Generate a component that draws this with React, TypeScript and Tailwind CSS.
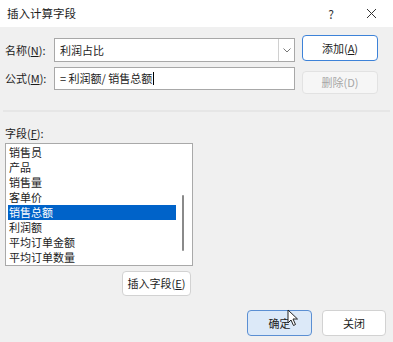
import React from "react";

const fields = [
  "销售员",
  "产品",
  "销售量",
  "客单价",
  "销售总额",
  "利润额",
  "平均订单金额",
  "平均订单数量",
];

const font = { fontFamily: '"Noto Sans CJK SC", "Noto Sans", sans-serif' };

export default function App() {
  return (
    <div
      className="relative h-[342px] w-[393px] overflow-hidden bg-[#f0f0f0] text-[11px] leading-none text-[#1c1c1c]"
      style={font}
    >
      {/* title bar */}
      <div className="flex h-[27px] items-center bg-white pl-[7px]">
        <span className="text-[11.5px]">插入计算字段</span>
        <span className="ml-auto mr-[32px] text-[12px] text-[#333]">?</span>
        <svg width="11" height="11" viewBox="0 0 11 11" className="mr-[16px]">
          <path d="M1 1 L10 10 M10 1 L1 10" stroke="#333" strokeWidth="1" />
        </svg>
      </div>

      {/* name row */}
      <div className="flex items-start pl-[5px] pt-[8px]">
        <div className="mt-[3px] flex h-[24px] w-[49px] items-center">
          名称(<u>N</u>):
        </div>
        <div className="mt-[3px] flex h-[24px] w-[241px] items-center border border-[#a8a8a8] bg-white">
          <span className="pl-[5px]">利润占比</span>
          <div className="ml-auto flex h-full w-[16px] items-center justify-center border-l border-[#d0d0d0]">
            <svg width="8" height="5" viewBox="0 0 8 5">
              <path d="M0.5 0.5 L4 4 L7.5 0.5" fill="none" stroke="#777" strokeWidth="1" />
            </svg>
          </div>
        </div>
        <button className="ml-[7px] flex h-[26px] w-[76px] items-center justify-center rounded-[4px] border border-[#3d82d8] bg-white text-[11px]">
          添加(<u>A</u>)
        </button>
      </div>

      {/* formula row */}
      <div className="flex items-start pl-[5px] pt-[5px]">
        <div className="flex h-[23px] w-[49px] items-center">
          公式(<u>M</u>):
        </div>
        <div className="flex h-[23px] w-[241px] items-center border border-[#a8a8a8] bg-white pl-[5px]">
          <span>= 利润额/ 销售总额</span>
          <span className="ml-[1px] h-[13px] w-[1px] bg-black" />
        </div>
        <button className="ml-[7px] mt-[4px] flex h-[23px] w-[76px] items-center justify-center rounded-[4px] border border-[#e2e2e2] bg-[#f6f6f6] text-[11px] text-[#a6a6a6]">
          删除(D)
        </button>
      </div>

      {/* separator */}
      <div className="mx-[3px] mt-[16px] h-[2px] bg-[#e6e6e6]" />

      {/* field list */}
      <div className="mt-[16px] pl-[5px]">
        字段(<u>F</u>):
      </div>
      <div className="ml-[5px] mt-[4px] flex h-[123px] w-[188px] border border-[#a9a9a9] bg-white pt-[1px]">
        <div className="w-[170px] pl-[2px]">
          {fields.map((f) => (
            <div
              key={f}
              className={
                "flex h-[15px] items-center pl-[1px] " +
                (f === "销售总额" ? "bg-[#0063c9] text-white" : "")
              }
            >
              {f}
            </div>
          ))}
        </div>
        <div className="ml-[6px] mt-[50px] h-[56px] w-[2px] rounded-full bg-[#8a8a8a]" />
      </div>

      <div className="flex pl-[122px] pt-[5px]">
        <button className="flex h-[25px] w-[69px] items-center justify-center rounded-[4px] border border-[#d2d2d2] bg-white text-[11px]">
          插入字段(<u>E</u>)
        </button>
      </div>

      {/* footer buttons */}
      <div className="flex pl-[247px] pt-[14px]">
        <button className="flex h-[26px] w-[65px] items-center justify-center rounded-[4px] border border-[#5b8fd3] bg-[#dce9f8] text-[11px]">
          确定
        </button>
        <button className="ml-[10px] flex h-[26px] w-[64px] items-center justify-center rounded-[4px] border border-[#d2d2d2] bg-white text-[11px]">
          关闭
        </button>
      </div>

      {/* mouse cursor */}
      <svg
        className="absolute left-[287px] top-[309px]"
        width="12"
        height="18"
        viewBox="0 0 12 18"
      >
        <path
          d="M1 1 L1 14 L4 11 L6.5 16.5 L8.5 15.5 L6 10 L10.5 10 Z"
          fill="white"
          stroke="#222"
          strokeWidth="1"
          strokeLinejoin="round"
        />
      </svg>
    </div>
  );
}
